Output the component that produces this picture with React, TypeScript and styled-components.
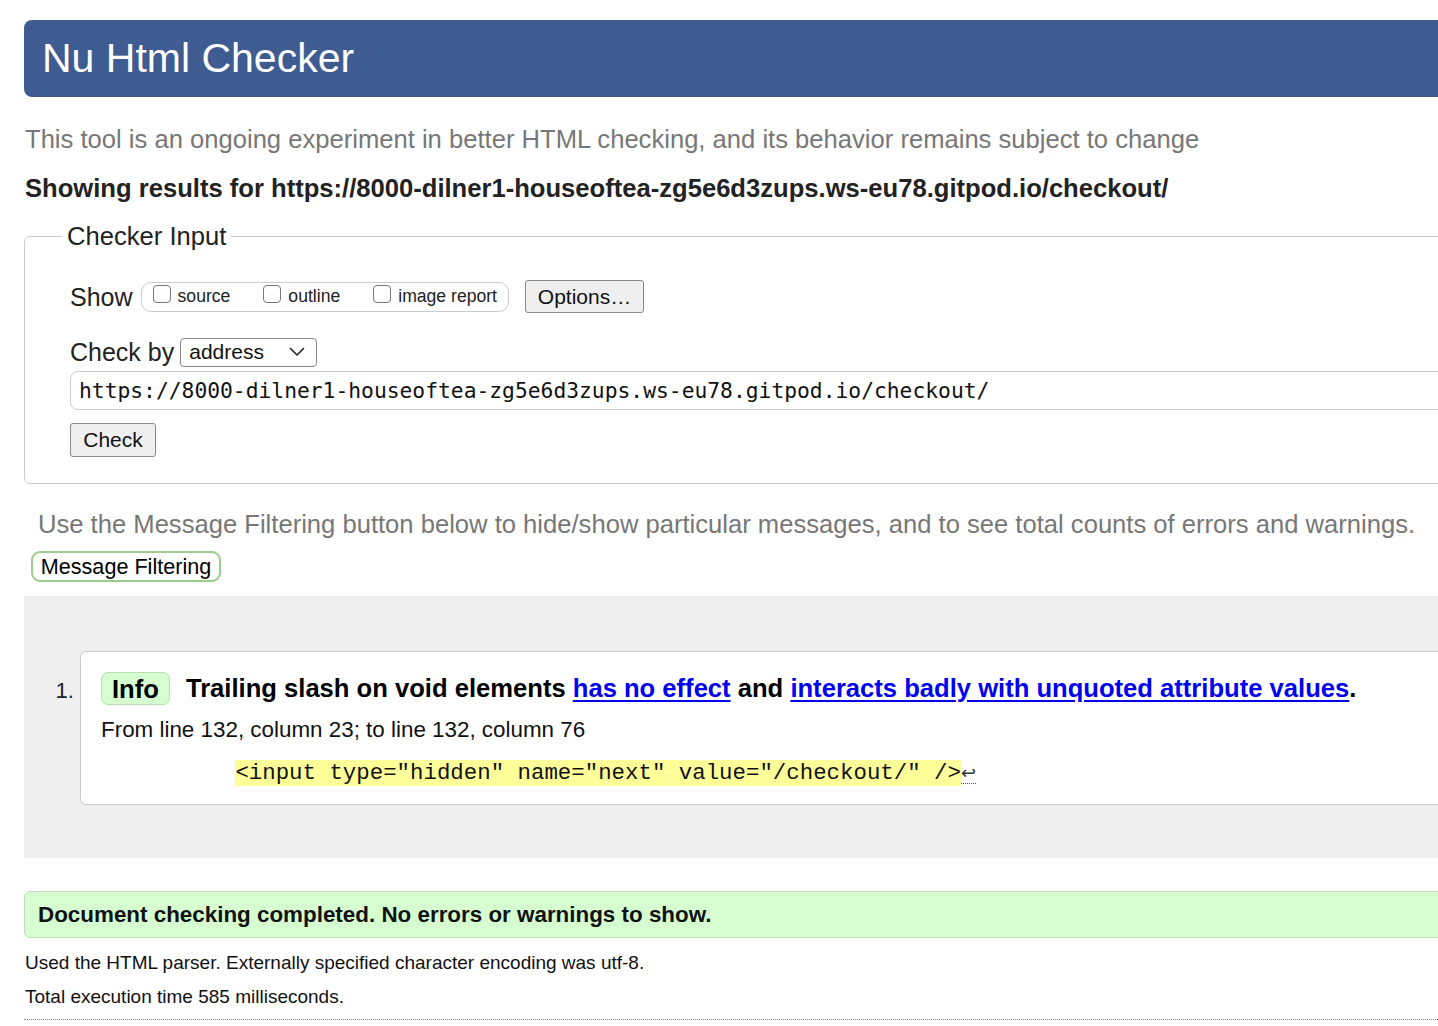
import React from "react";
import styled, { createGlobalStyle } from "styled-components";

const GlobalStyle = createGlobalStyle`
  html, body { margin: 0; padding: 0; background: #fff; overflow: hidden; }
  body { font-family: "Liberation Sans", Arial, Helvetica, sans-serif; color: #000; }
`;

const Page = styled.div`
  width: 1500px;
  padding: 20px 0 0 24px;
  box-sizing: border-box;
`;

const Header = styled.h1`
  margin: 0;
  height: 77px;
  line-height: 77px;
  background: #3e5c91;
  color: #fff;
  font-weight: normal;
  font-size: 41px;
  padding-left: 18px;
  border-radius: 8px;
`;

const Intro = styled.p`
  margin: 28px 0 0 1px;
  font-size: 25.6px;
  line-height: 28px;
  color: #777;
`;

const Showing = styled.p`
  margin: 21px 0 0 1px;
  font-size: 25.6px;
  line-height: 28px;
  font-weight: bold;
  color: #222;
`;

const Fieldset = styled.fieldset`
  margin: 20px 0 0 0;
  padding: 0 0 26px 45px;
  border: 1px solid #ccc;
  border-radius: 6px;
  min-width: 0;
`;

const Legend = styled.legend`
  margin-left: -8px;
  padding: 0 5px;
  font-size: 25.6px;
  line-height: 28px;
  color: #222;
`;

const Row = styled.div<{ $top: number }>`
  display: flex;
  align-items: center;
  margin-top: ${(p) => p.$top}px;
`;

const Label = styled.span`
  font-size: 25px;
  line-height: 30px;
  color: #222;
`;

const CheckGroup = styled.div`
  display: flex;
  align-items: center;
  gap: 33px;
  margin-left: 8px;
  height: 28px;
  padding: 0 11px 0 11px;
  border: 1px solid #ccc;
  border-radius: 10px;
`;

const CheckItem = styled.label`
  display: flex;
  align-items: center;
  gap: 7px;
  font-size: 17.6px;
  color: #222;
`;

const Box = styled.span`
  display: inline-block;
  width: 16px;
  height: 16px;
  border: 1px solid #777;
  border-radius: 4px;
  background: #fff;
  margin-top: -5px;
`;

const Button = styled.button<{ $w: number; $h: number; $ml?: number }>`
  width: ${(p) => p.$w}px;
  height: ${(p) => p.$h}px;
  margin-left: ${(p) => p.$ml ?? 0}px;
  padding: 0;
  font-family: "Liberation Sans", Arial, sans-serif;
  font-size: 21px;
  color: #111;
  background: #efefef;
  border: 1px solid #888;
  border-radius: 3px;
`;

const Select = styled.div`
  display: flex;
  align-items: center;
  justify-content: space-between;
  width: 137px;
  height: 29px;
  box-sizing: border-box;
  margin-left: 6px;
  padding: 0 11px 0 8px;
  border: 1px solid #888;
  border-radius: 4px;
  font-size: 21px;
  color: #111;
`;

const UrlInput = styled.div`
  margin-top: 4px;
  height: 39px;
  box-sizing: border-box;
  display: flex;
  align-items: center;
  padding-left: 8px;
  border: 1px solid #ccc;
  border-radius: 8px;
  font-family: "DejaVu Sans Mono", monospace;
  font-size: 21.3px;
  color: #111;
`;

const Hint = styled.p`
  margin: 26px 0 0 14px;
  font-size: 25.6px;
  line-height: 28px;
  color: #777;
`;

const FilterButton = styled.button`
  margin: 13px 0 0 7px;
  height: 31px;
  width: 190px;
  padding: 0;
  background: #fff;
  border: 2px solid #9acc8c;
  border-radius: 9px;
  font-family: "Liberation Sans", Arial, sans-serif;
  font-size: 21.6px;
  color: #000;
`;

const Results = styled.div`
  margin-top: 14px;
  background: #efefef;
  padding: 55px 0 53px 0;
`;

const List = styled.ol`
  margin: 0;
  padding: 0 0 0 56px;
  font-size: 22px;
`;

const Item = styled.li`
  background: #fff;
  border: 1px solid #ccc;
  border-radius: 6px;
  padding: 19px 0 18px 20px;
  &::marker { font-size: 22px; color: #222; }
`;

const MessageLine = styled.p`
  margin: 0;
  display: flex;
  align-items: center;
  font-size: 25.6px;
  font-weight: bold;
  line-height: 34px;
  white-space: pre;
`;

const Badge = styled.span`
  display: inline-block;
  height: 33px;
  line-height: 33px;
  padding: 0 10px;
  margin-right: 16px;
  background: #d5fdd0;
  border: 1px solid #b8dfb2;
  border-radius: 7px;
  box-sizing: border-box;
`;

const Link = styled.a`
  color: #0000ee;
  text-decoration: underline;
  text-underline-offset: 3px;
`;

const Location = styled.p`
  margin: 13px 0 0 0;
  font-size: 22.4px;
  line-height: 24px;
  color: #111;
`;

const Extract = styled.p`
  margin: 18px 0 0 0;
  font-family: "Liberation Mono", "Courier New", monospace;
  font-size: 22.4px;
  line-height: 25px;
  white-space: pre;
  color: #111;
`;

const Highlight = styled.mark`
  background: #ffff99;
  color: #111;
`;

const Lf = styled.span`
  color: #333;
  font-family: "DejaVu Sans", sans-serif;
  font-size: 18px;
  border-bottom: 1px dotted #555;
`;

const Success = styled.div`
  margin-top: 33px;
  height: 47px;
  box-sizing: border-box;
  display: flex;
  align-items: center;
  padding-left: 13px;
  background: #d5fdd0;
  border: 1px solid #c6d8c3;
  border-radius: 6px;
  font-size: 22.4px;
  font-weight: bold;
  color: #111;
`;

const Note = styled.p<{ $top: number }>`
  margin: ${(p) => p.$top}px 0 0 1px;
  font-size: 19px;
  line-height: 22px;
  color: #111;
`;

const Rule = styled.hr`
  margin: 11px 0 0 0;
  border: none;
  border-top: 1px dotted #888;
`;

const Chevron = () => (
  <svg width="16" height="10" viewBox="0 0 16 10" fill="none">
    <path d="M1.5 1.5 L8 8 L14.5 1.5" stroke="#222" strokeWidth="1.6" strokeLinecap="round" strokeLinejoin="round" />
  </svg>
);

export default function App() {
  return (
    <>
      <GlobalStyle />
      <Page>
        <Header>Nu Html Checker</Header>
        <Intro>This tool is an ongoing experiment in better HTML checking, and its behavior remains subject to change</Intro>
        <Showing>Showing results for https://8000-dilner1-houseoftea-zg5e6d3zups.ws-eu78.gitpod.io/checkout/</Showing>
        <Fieldset>
          <Legend>Checker Input</Legend>
          <Row $top={30}>
            <Label>Show</Label>
            <CheckGroup>
              <CheckItem><Box />source</CheckItem>
              <CheckItem><Box />outline</CheckItem>
              <CheckItem><Box />image report</CheckItem>
            </CheckGroup>
            <Button $w={119} $h={33} $ml={16}>Options…</Button>
          </Row>
          <Row $top={24}>
            <Label>Check by</Label>
            <Select>
              <span>address</span>
              <Chevron />
            </Select>
          </Row>
          <UrlInput>https://8000-dilner1-houseoftea-zg5e6d3zups.ws-eu78.gitpod.io/checkout/</UrlInput>
          <Row $top={13}>
            <Button $w={86} $h={34}>Check</Button>
          </Row>
        </Fieldset>
        <Hint>Use the Message Filtering button below to hide/show particular messages, and to see total counts of errors and warnings.</Hint>
        <FilterButton>Message Filtering</FilterButton>
        <Results>
          <List>
            <Item>
              <MessageLine>
                <Badge>Info</Badge>
                Trailing slash on void elements <Link href="#">has no effect</Link> and <Link href="#">interacts badly with unquoted attribute values</Link>.
              </MessageLine>
              <Location>From line 132, column 23; to line 132, column 76</Location>
              <Extract>
                {"          "}
                <Highlight>{'<input type="hidden" name="next" value="/checkout/" />'}</Highlight>
                <Lf>↩</Lf>
              </Extract>
            </Item>
          </List>
        </Results>
        <Success>Document checking completed. No errors or warnings to show.</Success>
        <Note $top={14}>Used the HTML parser. Externally specified character encoding was utf-8.</Note>
        <Note $top={12}>Total execution time 585 milliseconds.</Note>
        <Rule />
      </Page>
    </>
  );
}
